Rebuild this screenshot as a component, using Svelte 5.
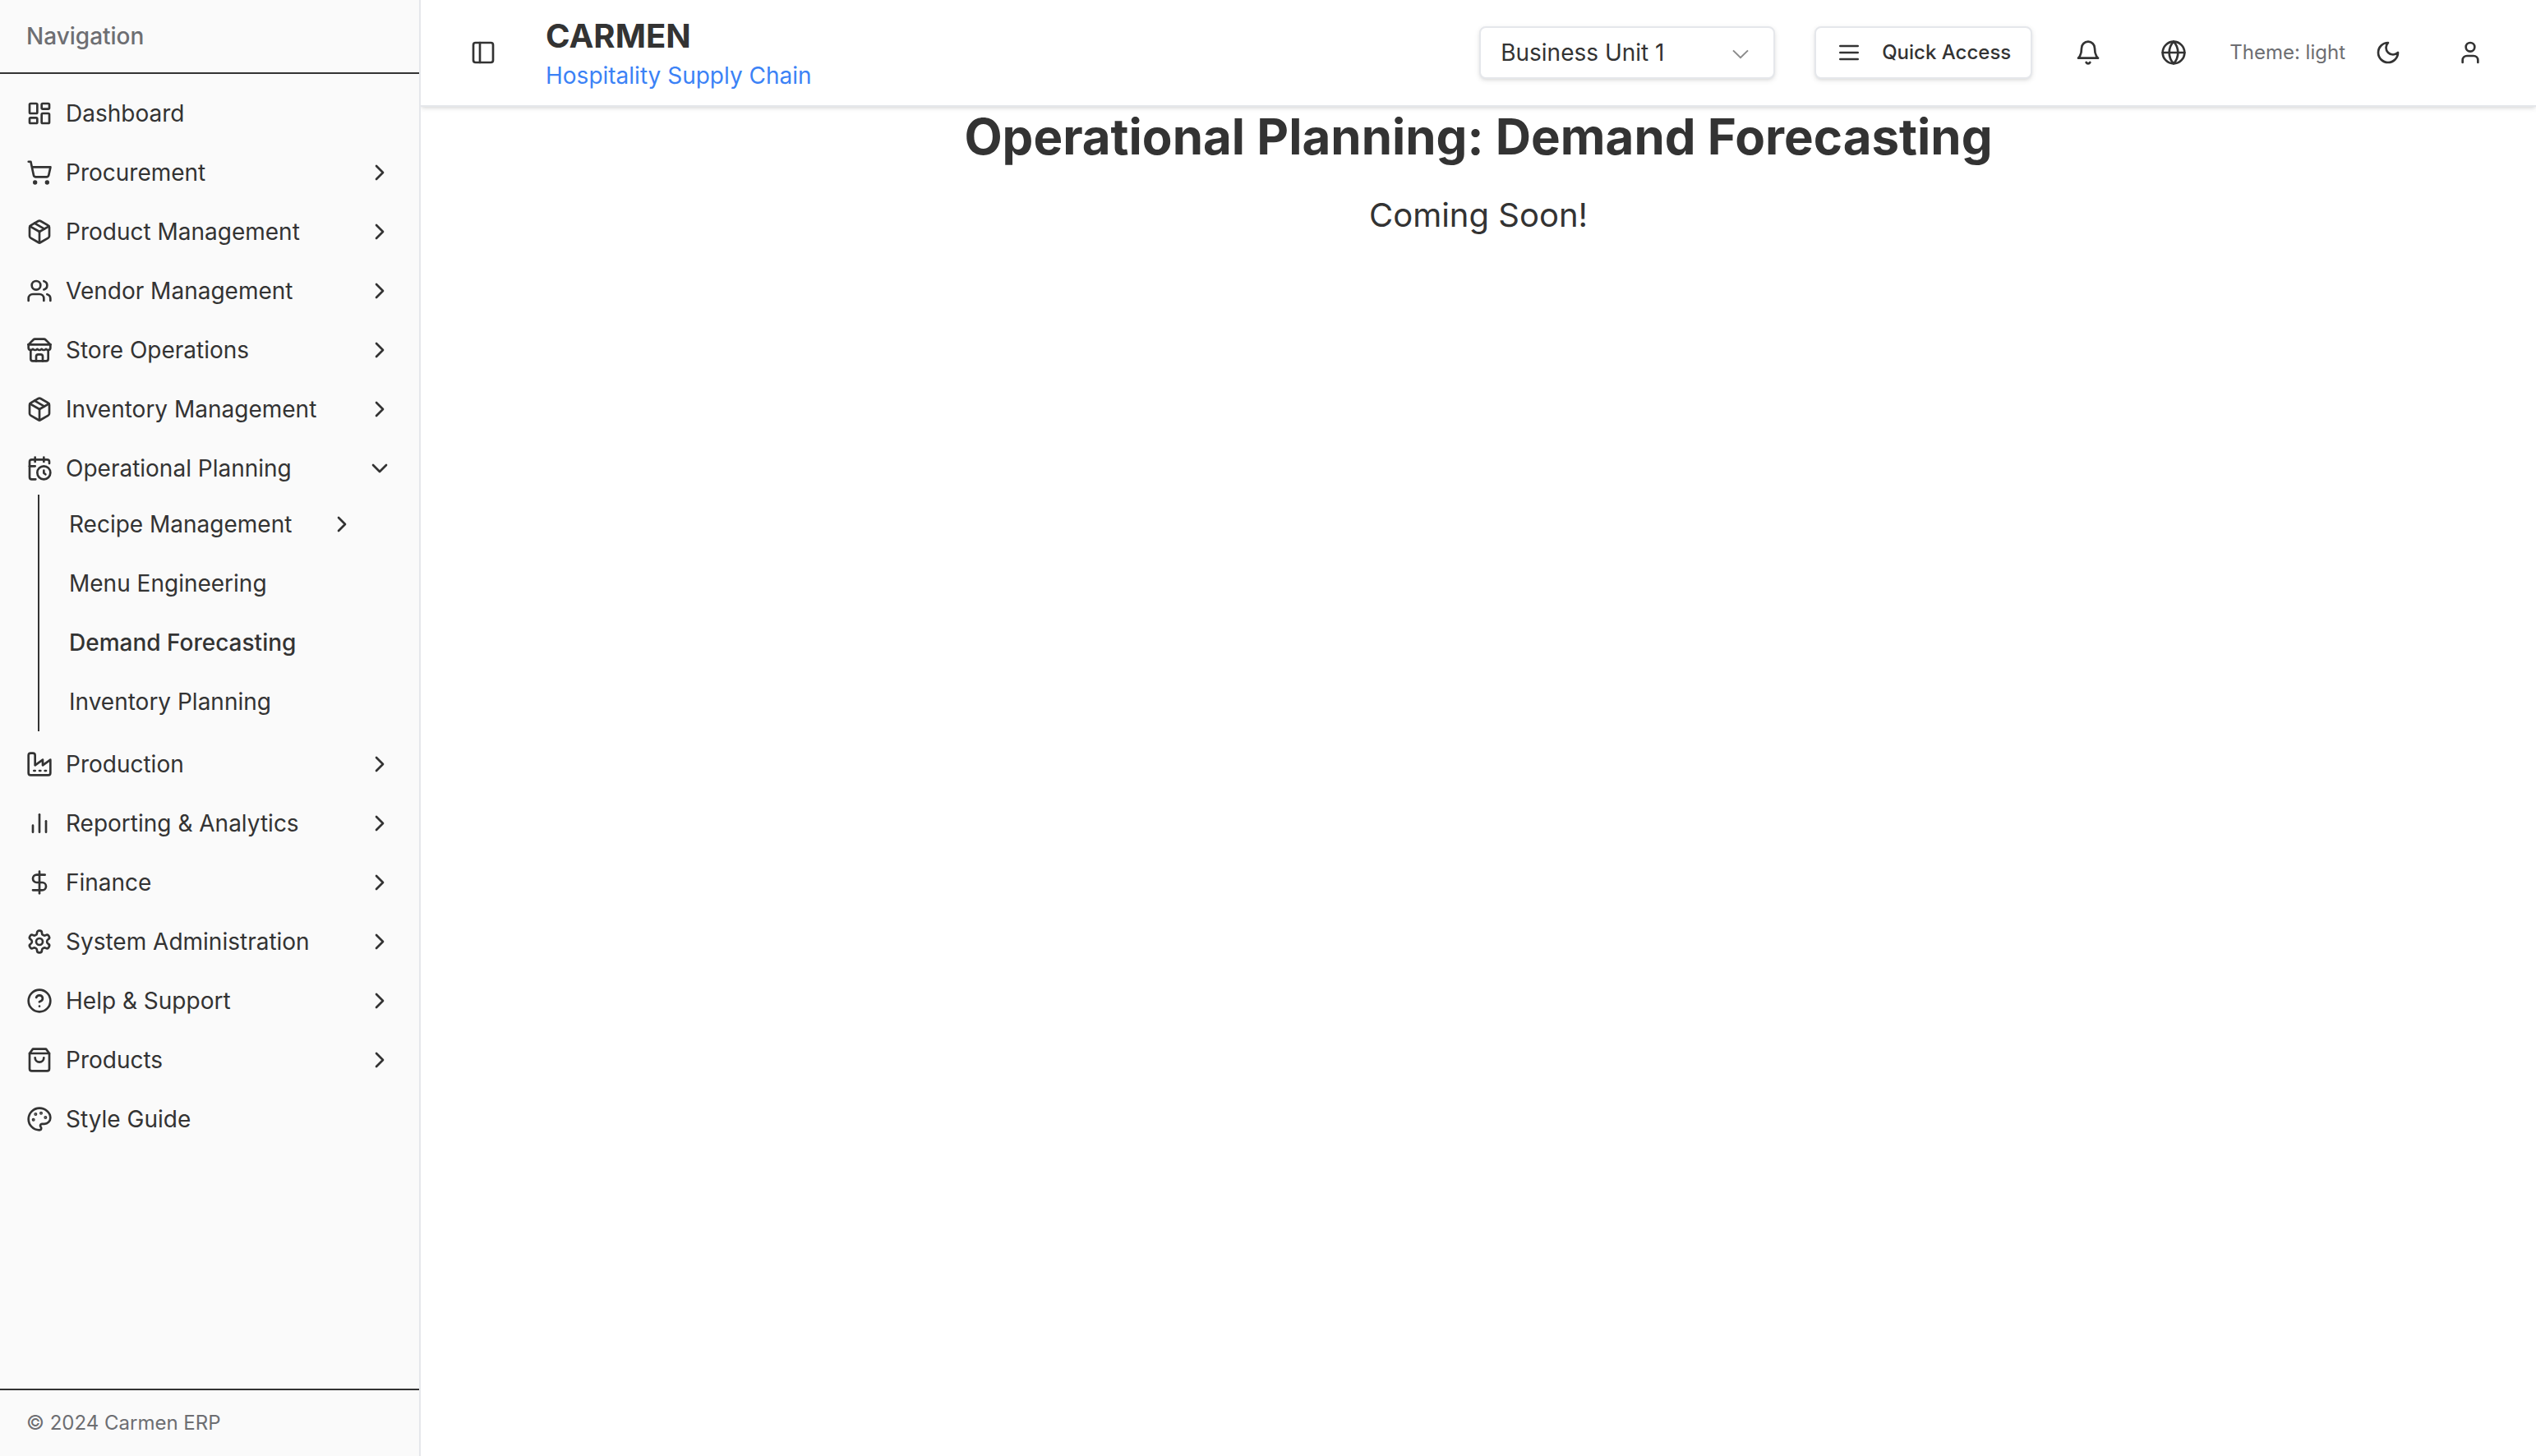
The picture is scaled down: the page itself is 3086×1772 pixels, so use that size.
<script>
  const icons = {
    dashboard: '<rect width="7" height="9" x="3" y="3" rx="1"/><rect width="7" height="5" x="14" y="3" rx="1"/><rect width="7" height="9" x="14" y="12" rx="1"/><rect width="7" height="5" x="3" y="16" rx="1"/>',
    cart: '<circle cx="8" cy="21" r="1"/><circle cx="19" cy="21" r="1"/><path d="M2.05 2.05h2l2.66 12.42a2 2 0 0 0 2 1.58h9.78a2 2 0 0 0 1.95-1.57l1.65-7.43H5.12"/>',
    box: '<path d="m7.5 4.27 9 5.15"/><path d="M21 8a2 2 0 0 0-1-1.73l-7-4a2 2 0 0 0-2 0l-7 4A2 2 0 0 0 3 8v8a2 2 0 0 0 1 1.73l7 4a2 2 0 0 0 2 0l7-4A2 2 0 0 0 21 16Z"/><path d="m3.3 7 8.7 5 8.7-5"/><path d="M12 22V12"/>',
    users: '<path d="M16 21v-2a4 4 0 0 0-4-4H6a4 4 0 0 0-4 4v2"/><circle cx="9" cy="7" r="4"/><path d="M22 21v-2a4 4 0 0 0-3-3.87"/><path d="M16 3.13a4 4 0 0 1 0 7.75"/>',
    store: '<path d="m2 7 4.41-4.41A2 2 0 0 1 7.83 2h8.34a2 2 0 0 1 1.42.59L22 7"/><path d="M4 12v8a2 2 0 0 0 2 2h12a2 2 0 0 0 2-2v-8"/><path d="M15 22v-4a2 2 0 0 0-2-2h-2a2 2 0 0 0-2 2v4"/><path d="M2 7h20"/><path d="M22 7v3a2 2 0 0 1-2 2a2.7 2.7 0 0 1-1.59-.63.7.7 0 0 0-.82 0A2.7 2.7 0 0 1 16 12a2.7 2.7 0 0 1-1.59-.63.7.7 0 0 0-.82 0A2.7 2.7 0 0 1 12 12a2.7 2.7 0 0 1-1.59-.63.7.7 0 0 0-.82 0A2.7 2.7 0 0 1 8 12a2.7 2.7 0 0 1-1.59-.63.7.7 0 0 0-.82 0A2.7 2.7 0 0 1 4 12a2 2 0 0 1-2-2V7"/>',
    calendar: '<path d="M21 7.5V6a2 2 0 0 0-2-2H5a2 2 0 0 0-2 2v14a2 2 0 0 0 2 2h3.5"/><path d="M16 2v4"/><path d="M8 2v4"/><path d="M3 10h5"/><path d="M17.5 17.5 16 16.3V14"/><circle cx="16" cy="16" r="6"/>',
    factory: '<path d="M2 20a2 2 0 0 0 2 2h16a2 2 0 0 0 2-2V8l-7 5V8l-7 5V4a2 2 0 0 0-2-2H4a2 2 0 0 0-2 2Z"/><path d="M17 18h1"/><path d="M12 18h1"/><path d="M7 18h1"/>',
    chart: '<path d="M18 20v-10"/><path d="M12 20V4"/><path d="M6 20v-6"/>',
    dollar: '<path d="M12 2v20"/><path d="M17 5H9.5a3.5 3.5 0 0 0 0 7h5a3.5 3.5 0 0 1 0 7H6"/>',
    gear: '<path d="M12.22 2h-.44a2 2 0 0 0-2 2v.18a2 2 0 0 1-1 1.73l-.43.25a2 2 0 0 1-2 0l-.15-.08a2 2 0 0 0-2.73.73l-.22.38a2 2 0 0 0 .73 2.73l.15.1a2 2 0 0 1 1 1.72v.51a2 2 0 0 1-1 1.74l-.15.09a2 2 0 0 0-.73 2.73l.22.38a2 2 0 0 0 2.73.73l.15-.08a2 2 0 0 1 2 0l.43.25a2 2 0 0 1 1 1.73V20a2 2 0 0 0 2 2h.44a2 2 0 0 0 2-2v-.18a2 2 0 0 1 1-1.73l.43-.25a2 2 0 0 1 2 0l.15.08a2 2 0 0 0 2.73-.73l.22-.39a2 2 0 0 0-.73-2.73l-.15-.08a2 2 0 0 1-1-1.74v-.5a2 2 0 0 1 1-1.74l.15-.09a2 2 0 0 0 .73-2.73l-.22-.38a2 2 0 0 0-2.73-.73l-.15.08a2 2 0 0 1-2 0l-.43-.25a2 2 0 0 1-1-1.73V4a2 2 0 0 0-2-2z"/><circle cx="12" cy="12" r="3"/>',
    help: '<circle cx="12" cy="12" r="10"/><path d="M9.09 9a3 3 0 0 1 5.83 1c0 2-3 3-3 3"/><path d="M12 17h.01"/>',
    bag: '<path d="M6 2 3 6v14a2 2 0 0 0 2 2h14a2 2 0 0 0 2-2V6l-3-4Z"/><path d="M3 6h18"/><path d="M16 10a4 4 0 0 1-8 0"/>',
    palette: '<circle cx="13.5" cy="6.5" r=".5" fill="currentColor"/><circle cx="17.5" cy="10.5" r=".5" fill="currentColor"/><circle cx="8.5" cy="7.5" r=".5" fill="currentColor"/><circle cx="6.5" cy="12.5" r=".5" fill="currentColor"/><path d="M12 2C6.5 2 2 6.5 2 12s4.5 10 10 10c.926 0 1.648-.746 1.648-1.688 0-.437-.18-.835-.437-1.125-.29-.289-.438-.652-.438-1.125a1.64 1.64 0 0 1 1.668-1.668h1.996c3.051 0 5.555-2.503 5.555-5.554C21.965 6.012 17.461 2 12 2z"/>',
    right: '<path d="m9 18 6-6-6-6"/>',
    down: '<path d="m6 9 6 6 6-6"/>',
    panel: '<rect width="18" height="18" x="3" y="3" rx="2"/><path d="M9 3v18"/>',
    menu: '<path d="M4 12h16"/><path d="M4 6h16"/><path d="M4 18h16"/>',
    bell: '<path d="M6 8a6 6 0 0 1 12 0c0 7 3 9 3 9H3s3-2 3-9"/><path d="M10.3 21a1.94 1.94 0 0 0 3.4 0"/>',
    globe: '<circle cx="12" cy="12" r="10"/><path d="M12 2a14.5 14.5 0 0 0 0 20 14.5 14.5 0 0 0 0-20"/><path d="M2 12h20"/>',
    moon: '<path d="M12 3a6 6 0 0 0 9 9 9 9 0 1 1-9-9Z"/>',
    user: '<path d="M19 21v-2a4 4 0 0 0-4-4H9a4 4 0 0 0-4 4v2"/><circle cx="12" cy="7" r="4"/>',
  };

  const items = [
    { label: 'Dashboard', icon: 'dashboard', leaf: true },
    { label: 'Procurement', icon: 'cart' },
    { label: 'Product Management', icon: 'box' },
    { label: 'Vendor Management', icon: 'users' },
    { label: 'Store Operations', icon: 'store' },
    { label: 'Inventory Management', icon: 'box' },
    {
      label: 'Operational Planning',
      icon: 'calendar',
      children: [
        { label: 'Recipe Management', nested: true },
        { label: 'Menu Engineering' },
        { label: 'Demand Forecasting', active: true },
        { label: 'Inventory Planning' },
      ],
    },
    { label: 'Production', icon: 'factory' },
    { label: 'Reporting & Analytics', icon: 'chart' },
    { label: 'Finance', icon: 'dollar' },
    { label: 'System Administration', icon: 'gear' },
    { label: 'Help & Support', icon: 'help' },
    { label: 'Products', icon: 'bag' },
    { label: 'Style Guide', icon: 'palette', leaf: true },
  ];

  let open = $state('Operational Planning');
  let unit = $state('Business Unit 1');
</script>

{#snippet icon(name)}
  <svg class="icon" viewBox="0 0 24 24" aria-hidden="true">{@html icons[name]}</svg>
{/snippet}

<div class="app">
  <aside class="sidebar">
    <div class="side-head">Navigation</div>
    <nav class="nav" aria-label="Main">
      <ul class="list">
        {#each items as item}
          <li>
            {#if item.leaf}
              <a class="row" href="#top">{@render icon(item.icon)}<span class="label">{item.label}</span></a>
            {:else}
              <button
                class="row"
                type="button"
                aria-expanded={open === item.label}
                onclick={() => (open = open === item.label ? '' : item.label)}
              >
                {@render icon(item.icon)}
                <span class="label">{item.label}</span>
                {@render icon(open === item.label && item.children ? 'down' : 'right')}
              </button>
            {/if}
          </li>
          {#if item.children && open === item.label}
            <li class="branch">
              <ul class="list sub">
                {#each item.children as child}
                  <li>
                    {#if child.nested}
                      <button class="row" type="button">
                        <span class="label">{child.label}</span>
                        {@render icon('right')}
                      </button>
                    {:else}
                      <a class="row" class:active={child.active} href="#top"><span class="label">{child.label}</span></a>
                    {/if}
                  </li>
                {/each}
              </ul>
            </li>
          {/if}
        {/each}
      </ul>
    </nav>
    <footer class="side-foot">© 2024 Carmen ERP</footer>
  </aside>

  <div class="page">
    <header class="topbar">
      <button class="icon-btn" type="button" aria-label="Toggle sidebar">{@render icon('panel')}</button>
      <a class="brand" href="#top">
        <span class="name">CARMEN</span>
        <span class="tagline">Hospitality Supply Chain</span>
      </a>
      <div class="tools">
        <div class="select">
          <select aria-label="Business unit" bind:value={unit}>
            <option>Business Unit 1</option>
            <option>Business Unit 2</option>
          </select>
          <svg class="caret" viewBox="0 0 15 15" aria-hidden="true"><path d="M3 5.7 7.5 10.1 12 5.7" /></svg>
        </div>
        <button class="quick" type="button">{@render icon('menu')}Quick Access</button>
        <button class="icon-btn bell" type="button" aria-label="Notifications">{@render icon('bell')}</button>
        <button class="icon-btn" type="button" aria-label="Language">{@render icon('globe')}</button>
        <div class="theme">
          <span>Theme: light</span>
          <button class="icon-btn" type="button" aria-label="Toggle theme">{@render icon('moon')}</button>
        </div>
        <button class="icon-btn" type="button" aria-label="Account">{@render icon('user')}</button>
      </div>
    </header>
    <main class="content">
      <h1>Operational Planning: Demand Forecasting</h1>
      <p>Coming Soon!</p>
    </main>
  </div>
</div>

<style>
  :global(body) {
    margin: 0;
    background: #fff;
  }
  .app {
    display: flex;
    min-height: 100vh;
    font: 400 28px/40px Inter, sans-serif;
    color: #333;
  }
  button,
  select {
    font: inherit;
    color: inherit;
    background: none;
    border: 0;
    margin: 0;
    padding: 0;
    cursor: pointer;
  }
  a {
    color: inherit;
    text-decoration: none;
  }
  .icon {
    width: 32px;
    height: 32px;
    flex: none;
    fill: none;
    stroke: currentColor;
    stroke-width: 2;
    stroke-linecap: round;
    stroke-linejoin: round;
  }

  .sidebar {
    box-sizing: border-box;
    width: 512px;
    flex: none;
    display: flex;
    flex-direction: column;
    background: #fafafa;
    border-right: 2px solid #e5e7eb;
  }
  .side-head {
    padding: 24px 32px;
    border-bottom: 2px solid #333;
    font-weight: 500;
    color: #6d6e72;
  }
  .nav {
    flex: 1;
    padding: 16px;
  }
  .list {
    list-style: none;
    margin: 0;
    padding: 0;
    display: flex;
    flex-direction: column;
    gap: 8px;
  }
  .row {
    box-sizing: border-box;
    width: 100%;
    height: 64px;
    padding: 0 16px;
    display: flex;
    align-items: center;
    gap: 16px;
    text-align: left;
    white-space: nowrap;
  }
  .label {
    flex: 1;
  }
  .branch {
    margin: -8px 30px 0;
  }
  .sub {
    border-left: 2px solid #333;
    padding: 4px 16px 4px 20px;
  }
  .active {
    font-weight: 500;
  }
  .side-foot {
    padding: 24px 32px;
    border-top: 2px solid #333;
    font-size: 24px;
    line-height: 32px;
    color: #6d6e72;
  }

  .page {
    flex: 1;
    min-width: 0;
  }
  .topbar {
    display: flex;
    align-items: center;
    height: 128px;
    padding: 0 48px 0 44px;
    border-bottom: 2px solid #e5e7eb;
    box-shadow: 0 2px 6px rgba(0, 0, 0, 0.1), 0 2px 4px -2px rgba(0, 0, 0, 0.1);
    clip-path: inset(0 0 -12px 0);
  }
  .icon-btn {
    width: 64px;
    height: 64px;
    display: flex;
    align-items: center;
    justify-content: center;
  }
  .brand {
    display: flex;
    flex-direction: column;
    margin-left: 44px;
  }
  .name {
    font-size: 40px;
    line-height: 56px;
    font-weight: 700;
  }
  .tagline {
    color: #3b82f6;
  }
  .tools {
    margin-left: auto;
    display: flex;
    align-items: center;
  }
  .select {
    position: relative;
    width: 360px;
  }
  .select select,
  .quick {
    box-sizing: border-box;
    height: 64px;
    border: 2px solid #e5e7eb;
    border-radius: 8px;
    background: #fff;
    box-shadow: 0 2px 6px rgba(0, 0, 0, 0.1), 0 2px 4px -2px rgba(0, 0, 0, 0.1);
  }
  .select select {
    width: 100%;
    padding: 0 24px;
    appearance: none;
  }
  .caret {
    position: absolute;
    right: 27px;
    top: 18px;
    width: 30px;
    height: 30px;
    fill: none;
    stroke: #8a8a8a;
    pointer-events: none;
  }
  .quick {
    display: flex;
    align-items: center;
    gap: 24px;
    margin-left: 48px;
    padding: 0 24px;
    font-size: 24px;
    font-weight: 500;
  }
  .bell {
    margin-left: 36px;
  }
  .tools .icon-btn + .icon-btn {
    margin-left: 40px;
  }
  .theme {
    display: flex;
    align-items: center;
    gap: 20px;
    margin: 0 36px;
    font-size: 24px;
    color: #6d6e72;
  }
  .theme .icon-btn {
    color: #333;
  }

  .content {
    text-align: center;
  }
  h1 {
    margin: 0;
    font-size: 60px;
    line-height: 72px;
    font-weight: 700;
  }
  p {
    margin: 32px 0 0;
    font-size: 40px;
    line-height: 56px;
  }
</style>
